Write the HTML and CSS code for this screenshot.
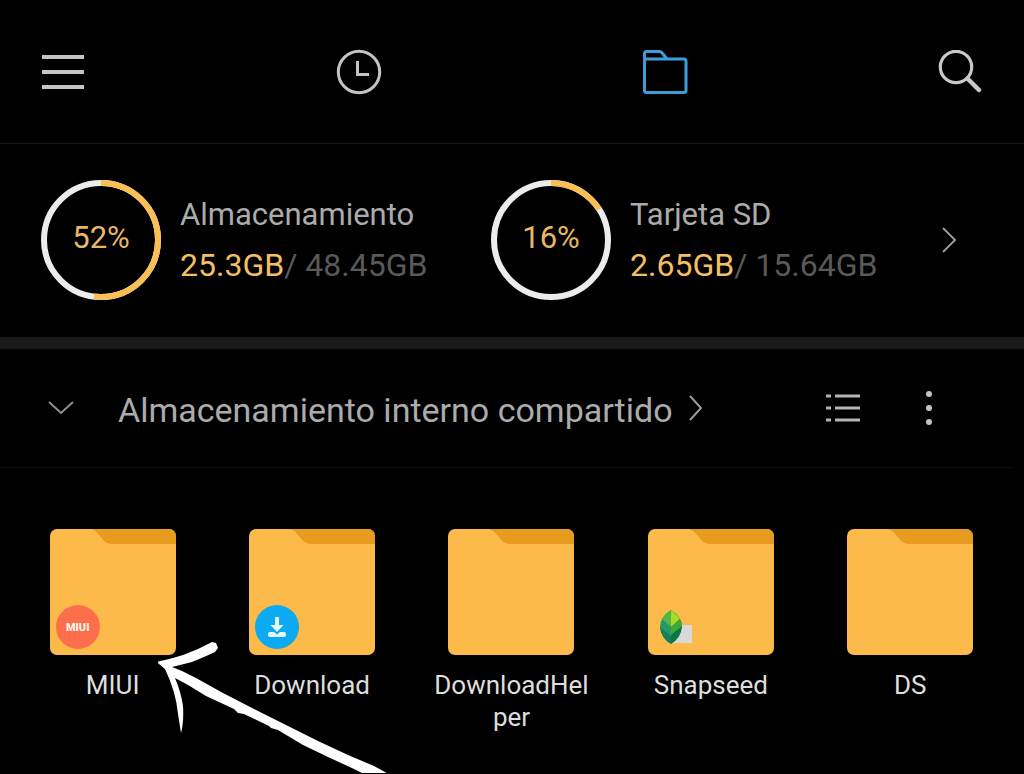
FILE: index.html
```html
<!DOCTYPE html>
<html lang="es">
<head>
<meta charset="utf-8">
<meta name="viewport" content="width=device-width, initial-scale=1">
<title>Administrador de archivos</title>
<link rel="stylesheet" href="styles.css">
</head>
<body>
<svg width="0" height="0" class="defs" aria-hidden="true">
  <symbol id="folder" viewBox="0 0 126 126">
    <rect width="126" height="126" rx="7" fill="#fcba4a"/>
    <path d="M41 0H119a7 7 0 0 1 7 7V15H62C55 15 52 9 48 5C46 2 44 1 41 0Z" fill="#e89c1f"/>
  </symbol>
</svg>

<header class="topbar">
  <button class="icon-button" type="button" aria-label="Menú">
    <svg width="44" height="44" viewBox="0 0 44 44" stroke="#c4c4c4" stroke-width="4"><path d="M1 7H43M1 22H43M1 37H43"/></svg>
  </button>
  <nav class="tabs">
    <button class="icon-button" type="button" aria-label="Recientes">
      <svg width="46" height="46" viewBox="0 0 46 46" fill="none" stroke="#c4c4c4" stroke-width="3"><circle cx="23" cy="23" r="20.7"/><path d="M21.5 12V25.500H33"/></svg>
    </button>
    <button class="icon-button" type="button" aria-label="Carpetas">
      <svg width="46" height="46" viewBox="0 0 46 46" fill="none" stroke="#3c9ddb" stroke-width="3" stroke-linejoin="round"><path d="M2.500 10V4.500Q2.500 2.500 4.500 2.500H17.500Q19 2.500 20 3.700L25 10M2.500 10H42Q44 10 44 12V41.500Q44 43.500 42 43.500H4.500Q2.500 43.500 2.500 41.500Z"/></svg>
    </button>
  </nav>
  <button class="icon-button" type="button" aria-label="Buscar">
    <svg width="44" height="44" viewBox="0 0 44 44" fill="none" stroke="#c9c9c9"><circle cx="18" cy="17" r="15.700" stroke-width="3.200"/><path d="M29.500 28.500L41 40" stroke-width="4.500" stroke-linecap="round"/></svg>
  </button>
</header>

<section class="storage">
  <a class="volume" href="#interno">
    <span class="ring">
      <svg class="ring-art" width="120" height="120" viewBox="0 0 120 120" fill="none" stroke-width="6"><circle cx="60" cy="60" r="57" stroke="#ececec"/><circle cx="60" cy="60" r="57" stroke="#f9bf55" pathLength="100" stroke-dasharray="52 48" transform="rotate(-90 60 60)"/></svg>
      <span class="percent">52%</span>
    </span>
    <span class="volume-text">
      <span class="volume-name">Almacenamiento</span>
      <span class="volume-size"><span class="used">25.3GB</span>/ 48.45GB</span>
    </span>
  </a>
  <a class="volume" href="#sd">
    <span class="ring">
      <svg class="ring-art" width="120" height="120" viewBox="0 0 120 120" fill="none" stroke-width="6"><circle cx="60" cy="60" r="57" stroke="#ececec"/><circle cx="60" cy="60" r="57" stroke="#f9bf55" pathLength="100" stroke-dasharray="16 84" transform="rotate(-90 60 60)"/></svg>
      <span class="percent">16%</span>
    </span>
    <span class="volume-text">
      <span class="volume-name">Tarjeta SD</span>
      <span class="volume-size"><span class="used">2.65GB</span>/ 15.64GB</span>
    </span>
  </a>
  <button class="icon-button" type="button" aria-label="Más almacenamiento">
    <svg width="16" height="28" viewBox="0 0 16 28" fill="none" stroke="#9a9a9a" stroke-width="2"><path d="M2 2L14 14L2 26"/></svg>
  </button>
</section>

<main>
  <div class="pathbar">
    <button class="icon-button" type="button" aria-label="Contraer">
      <svg width="26" height="14" viewBox="0 0 26 14" fill="none" stroke="#8f8f8f" stroke-width="2"><path d="M1 1L13 12L25 1"/></svg>
    </button>
    <a class="path" href="#ruta">
      <span class="path-name">Almacenamiento interno compartido</span>
      <svg width="14" height="26" viewBox="0 0 14 26" fill="none" stroke="#9a9a9a" stroke-width="2"><path d="M1 1L12 13L1 25"/></svg>
    </a>
    <button class="icon-button" type="button" aria-label="Vista de lista">
      <svg width="36" height="28" viewBox="0 0 36 28" stroke="#b4b4b4" stroke-width="3"><path d="M1 2H6M10 2H35M1 14H6M10 14H35M1 26H6M10 26H35"/></svg>
    </button>
    <button class="icon-button more" type="button" aria-label="Más opciones">
      <svg width="8" height="36" viewBox="0 0 8 36" fill="#c4c4c4"><circle cx="4" cy="4" r="3"/><circle cx="4" cy="18" r="3"/><circle cx="4" cy="32" r="3"/></svg>
    </button>
  </div>

  <ul class="files">
    <li class="file">
      <a class="file-link" href="#miui">
        <span class="thumb">
          <svg width="126" height="126"><use href="#folder"/></svg>
          <span class="badge badge-miui" aria-hidden="true">MIUI</span>
        </span>
        <span class="file-name">MIUI</span>
      </a>
      <svg class="pointer" width="240" height="134" viewBox="0 0 240 134" fill="#fff" aria-hidden="true">
        <path d="M-1 22L2 21L7 20L15 18L25 15L40 9L54 2L58 3L60 8L57 12L46 17L34 22L14 27L24 31L38 38L65 53L100 71L130 86L160 101L190 115L216 126L236 137H212L196 129L170 117L145 105L125 93L120 90L113 88L111 86L88 75L86 74L80 73L76 69L48 56L30 45L17 38Q23 52 25 66Q26 82 23 93L20 74Q18 52 7 29L1 24Z"/>
      </svg>
    </li>
    <li class="file">
      <a class="file-link" href="#download">
        <span class="thumb">
          <svg width="126" height="126"><use href="#folder"/></svg>
          <svg class="badge" width="44" height="44" viewBox="0 0 44 44"><circle cx="22" cy="22" r="22" fill="#0caaf0"/><path d="M20 12H24V20H28.500L22 27L15.500 20H20ZM15 27H19L22 29.500L25 27H29Q31 27 31 29V30Q31 32 29 32H15Q13 32 13 30V29Q13 27 15 27Z" fill="#e4fbff"/></svg>
        </span>
        <span class="file-name">Download</span>
      </a>
    </li>
    <li class="file">
      <a class="file-link" href="#downloadhelper">
        <span class="thumb"><svg width="126" height="126"><use href="#folder"/></svg></span>
        <span class="file-name">DownloadHelper</span>
      </a>
    </li>
    <li class="file">
      <a class="file-link" href="#snapseed">
        <span class="thumb">
          <svg width="126" height="126"><use href="#folder"/></svg>
          <svg class="badge" width="44" height="44" viewBox="0 0 44 44"><rect x="17" y="20" width="21" height="18" fill="#d9dad8"/><path d="M17 5Q6 12 6 22Q7 33 17 39Z" fill="#25996a"/><path d="M17 5Q28 12 28 22Q27 33 17 39Z" fill="#0c7548"/><path d="M17 5Q11 9 8 14L17 22Z" fill="#55b548"/><path d="M17 5Q23 9 26 14L17 22Z" fill="#a4dc25"/><path d="M26 14L17 22V30L28 21Q28 17 26 14Z" fill="#3da63c"/><path d="M6 22L17 31V39Q7 33 6 22Z" fill="#148055"/></svg>
        </span>
        <span class="file-name">Snapseed</span>
      </a>
    </li>
    <li class="file">
      <a class="file-link" href="#ds">
        <span class="thumb"><svg width="126" height="126"><use href="#folder"/></svg></span>
        <span class="file-name">DS</span>
      </a>
    </li>
  </ul>
</main>
</body>
</html>
```
FILE: styles.css
```css
* { box-sizing: border-box; }

body {
  margin: 0;
  background: #000;
  color: #ababab;
  font-family: Roboto, "Liberation Sans", sans-serif;
  font-size: 32px;
}

a { color: inherit; text-decoration: none; }
svg { display: block; }
.defs { position: absolute; }

.icon-button {
  display: flex;
  padding: 0;
  border: 0;
  background: none;
}

.topbar {
  display: flex;
  align-items: center;
  justify-content: space-between;
  height: 144px;
  padding: 0 42px 0 41px;
  border-bottom: 1px solid #1a1a1a;
}

.tabs { display: flex; gap: 260px; }

.storage {
  display: grid;
  grid-template-columns: 1fr 1fr 16px;
  align-items: center;
  height: 205px;
  padding: 0 67px 2px 41px;
  border-bottom: 12px solid #1a1a1a;
}

.volume { display: flex; align-items: center; gap: 19px; }
.ring { display: grid; place-items: center; }
.ring-art, .percent { grid-area: 1 / 1; }
.percent { padding-bottom: 4px; color: #e8b765; font-size: 31px; }
.volume-text { display: flex; flex-direction: column; line-height: 51px; white-space: nowrap; }
.volume-name { font-size: 31px; }
.volume-size { color: #595959; }
.used { color: #f3bf62; }

.pathbar {
  display: flex;
  align-items: center;
  height: 119px;
  margin-right: 12px;
  padding: 0 79px 0 48px;
  border-bottom: 1px solid #0c0c0c;
}

.path {
  display: flex;
  flex: 1;
  align-items: center;
  gap: 16px;
  padding-left: 44px;
  font-size: 34px;
  line-height: 42px;
  white-space: nowrap;
}

.path-name { padding-top: 4px; }
.more { margin-left: 64px; }

.files {
  display: grid;
  grid-template-columns: repeat(5, 1fr);
  margin: 0;
  padding: 61px 14px 40px 13px;
  list-style: none;
}

.file { position: relative; }

.file-link {
  display: flex;
  flex-direction: column;
  align-items: center;
  gap: 14px;
}

.thumb { position: relative; }
.badge { position: absolute; left: 6px; bottom: 6px; }

.badge-miui {
  display: grid;
  place-items: center;
  width: 44px;
  height: 44px;
  border-radius: 50%;
  background: #fc6e4c;
  color: #fff3e6;
  font-size: 11px;
  font-weight: 900;
}

.file-name {
  width: 160px;
  color: #dedede;
  font-size: 26px;
  line-height: 32px;
  text-align: center;
  word-break: break-all;
}

.pointer {
  position: absolute;
  left: 145px;
  top: 111px;
  z-index: 1;
  pointer-events: none;
}
```
